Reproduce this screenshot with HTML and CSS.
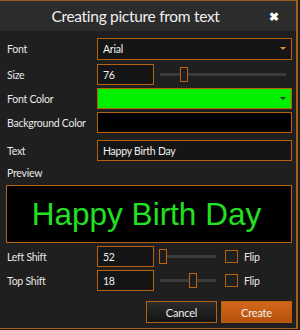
FILE: index.html
```html
<!DOCTYPE html>
<html>
  <head lang="en">
    <meta charset="utf-8"/>
    <title>Creating picture from text</title>
    <link rel="stylesheet" href="styles.css">
  </head>
  <body>
    <div class="dialog">
      <div class="titleBar">
        <span class="title">Creating picture from text</span>
        <span class="close">&#10006;</span>
      </div>

      <div class="form">
        <div class="row rowFont">
          <label>Font</label>
          <div class="field select">Arial<span class="arrow"></span></div>
        </div>

        <div class="row rowSize">
          <label>Size</label>
          <div class="field small">76</div>
          <div class="slider wide"><span class="thumb" style="left: 20px"></span></div>
        </div>

        <div class="row rowColor">
          <label>Font Color</label>
          <div class="field green"><span class="arrow dark"></span></div>
        </div>

        <div class="row rowBg">
          <label>Background Color</label>
          <div class="field black"></div>
        </div>

        <div class="row rowText">
          <label>Text</label>
          <div class="field">Happy Birth Day</div>
        </div>

        <div class="previewLabel">Preview</div>
        <div class="preview">Happy Birth Day</div>

        <div class="row rowLeft">
          <label>Left Shift</label>
          <div class="field small">52</div>
          <div class="slider short"><span class="thumb" style="left: -1px"></span></div>
          <span class="check"></span>
          <span class="flip">Flip</span>
        </div>

        <div class="row rowTop">
          <label>Top Shift</label>
          <div class="field small">18</div>
          <div class="slider short"><span class="thumb" style="left: 29px"></span></div>
          <span class="check"></span>
          <span class="flip">Flip</span>
        </div>

        <div class="buttons">
          <button class="cancel">Cancel</button>
          <button class="create">Create</button>
        </div>
      </div>
    </div>
  </body>
</html>
```

FILE: styles.css
```css
body {
  margin: 0;
  background-color: #1b1b1b;
  font-family: Lato, "Noto Sans", sans-serif;
  color: #e8e8e8;
}

.dialog {
  width: 296px;
  height: 327px;
  background-color: #1f1f1f;
  border-top: 1px solid #9a5a1c;
  border-right: 2px solid #a8601a;
  border-bottom: 1px solid #a8601a;
}

.titleBar {
  height: 30px;
  background-color: #2c2c2c;
  display: flex;
  align-items: center;
}

.title {
  flex: 1;
  text-align: center;
  font-size: 15.5px;
  letter-spacing: -0.3px;
  color: #f0f0f0;
  margin-left: 2px;
}

.close {
  font-size: 12px;
  font-weight: bold;
  color: #ffffff;
  margin-right: 17px;
}

.form {
  padding: 0 4px 0 6px;
  font-size: 10.5px;
  letter-spacing: -0.25px;
}

.row {
  display: flex;
  align-items: center;
  height: 21px;
}

.row label {
  width: 90px;
  padding-left: 1px;
  flex: none;
  white-space: nowrap;
}

.rowFont { margin-top: 7px; height: 22px; }
.rowSize { margin-top: 4px; }
.rowColor { margin-top: 3px; }
.rowBg { margin-top: 3px; }
.rowText { margin-top: 7px; }
.rowLeft { margin-top: 3px; }
.rowTop { margin-top: 3px; }

.field {
  flex: 1;
  height: 100%;
  box-sizing: border-box;
  border: 1px solid #b5610f;
  background-color: #151515;
  display: flex;
  align-items: center;
  padding-left: 5px;
  color: #f2f2f2;
  position: relative;
}

.field.small {
  flex: none;
  width: 57px;
}

.field.green {
  background-color: #00f000;
}

.field.black {
  background-color: #000000;
}

.arrow {
  position: absolute;
  right: 5px;
  top: 8px;
  border-left: 3px solid transparent;
  border-right: 3px solid transparent;
  border-top: 3px solid #f08a1a;
}

.arrow.dark {
  border-top-color: #1a3a1a;
}

.slider {
  position: relative;
  height: 3px;
  background-color: #3a3a3a;
  margin-left: 6px;
}

.slider.wide {
  width: 126px;
}

.slider.short {
  width: 56px;
}

.thumb {
  position: absolute;
  top: -6px;
  width: 6px;
  height: 13px;
  border: 1px solid #c0620e;
  background-color: #1e1e1e;
}

.check {
  width: 11px;
  height: 11px;
  border: 1px solid #b5610f;
  margin-left: 9px;
}

.flip {
  margin-left: 6px;
}

.previewLabel {
  margin-top: 6px;
  height: 17px;
  padding-left: 1px;
}

.preview {
  height: 56px;
  margin-top: 1px;
  padding-right: 5px;
  border: 1px solid #b5610f;
  background-color: #000000;
  color: #22e022;
  font-family: "Liberation Sans", Arial, sans-serif;
  font-size: 31.5px;
  letter-spacing: 0;
  display: flex;
  align-items: center;
  justify-content: center;
}

.buttons {
  display: flex;
  justify-content: flex-end;
  gap: 4px;
  margin-top: 10px;
}

.buttons button {
  width: 71px;
  height: 22px;
  font-family: Lato, "Noto Sans", sans-serif;
  font-size: 11px;
  letter-spacing: -0.2px;
  color: #f0f0f0;
  border: 1px solid #b5610f;
  padding: 0;
}

.cancel {
  background: linear-gradient(#2c2c2c, #141414);
}

.create {
  background: linear-gradient(#d2681a, #b8500a);
  border-color: #d06a1a;
}
```
